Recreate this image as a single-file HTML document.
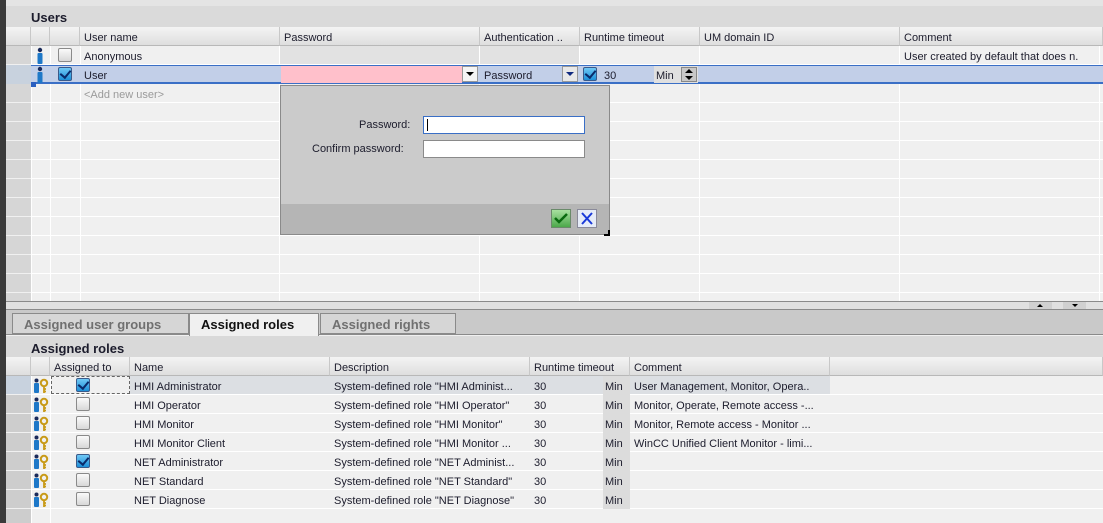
<!DOCTYPE html><html><head><style>
*{margin:0;padding:0;box-sizing:border-box}
body{width:1103px;height:523px;overflow:hidden;background:#f0f0f0;font-family:"Liberation Sans",sans-serif;font-size:11px;color:#1c1c2c;position:relative}
.a{position:absolute}
.t{position:absolute;white-space:nowrap;line-height:19px;margin-top:2px}
.cb{position:absolute;width:14px;height:14px;border:1px solid #8a8a8a;border-radius:2px;background:linear-gradient(#fafafa,#d8d8d8)}
.cb.on{background:linear-gradient(#6fc8f5,#1d8fd8);border-color:#3a5a8a}
.cb.on:after{content:"";position:absolute;left:3px;top:0px;width:5px;height:8px;border:solid #0a2a6a;border-width:0 2px 2px 0;transform:rotate(40deg)}
.hd{background:linear-gradient(#f4f4f4,#dedede);border-right:1px solid #c8c8c8;border-bottom:1px solid #b8b8b8}
svg.i{position:absolute}
</style></head><body>
<div class="a" style="left:0;top:0;width:6px;height:523px;background:#3a3a3a"></div>
<div class="a" style="left:6px;top:0;width:1097px;height:6px;background:#e4e4e4"></div>
<div class="a" style="left:6px;top:6px;width:1097px;height:21px;background:#dadada"></div>
<div class="t" style="left:31px;top:5px;font-size:13px;font-weight:bold;line-height:21px">Users</div>
<div class="a hd" style="left:6px;top:27px;width:25px;height:19px"></div>
<div class="a hd" style="left:31px;top:27px;width:19px;height:19px"></div>
<div class="a hd" style="left:50px;top:27px;width:30px;height:19px"></div>
<div class="a hd" style="left:80px;top:27px;width:200px;height:19px"></div><div class="t" style="left:84px;top:27px">User name</div>
<div class="a hd" style="left:280px;top:27px;width:200px;height:19px"></div><div class="t" style="left:284px;top:27px">Password</div>
<div class="a hd" style="left:480px;top:27px;width:100px;height:19px"></div><div class="t" style="left:484px;top:27px">Authentication ..</div>
<div class="a hd" style="left:580px;top:27px;width:120px;height:19px"></div><div class="t" style="left:584px;top:27px">Runtime timeout</div>
<div class="a hd" style="left:700px;top:27px;width:200px;height:19px"></div><div class="t" style="left:704px;top:27px">UM domain ID</div>
<div class="a hd" style="left:900px;top:27px;width:203px;height:19px"></div><div class="t" style="left:904px;top:27px">Comment</div>
<div class="a" style="left:6px;top:46px;width:25px;height:255px;background:#d6d6d6"></div>
<div class="a" style="left:31px;top:46px;width:1072px;height:255px;background:repeating-linear-gradient(#f0f0f0 0 18px,#fff 18px 19px)"></div>
<div class="a" style="left:6px;top:46px;width:25px;height:255px;background:repeating-linear-gradient(transparent 0 18px,#f0f0f0 18px 19px)"></div>
<div class="a" style="left:31px;top:46px;width:1px;height:255px;background:#fff"></div>
<div class="a" style="left:50px;top:46px;width:1px;height:255px;background:#fff"></div>
<div class="a" style="left:80px;top:46px;width:1px;height:255px;background:#fff"></div>
<div class="a" style="left:279px;top:46px;width:1px;height:255px;background:#fff"></div>
<div class="a" style="left:479px;top:46px;width:1px;height:255px;background:#fff"></div>
<div class="a" style="left:579px;top:46px;width:1px;height:255px;background:#fff"></div>
<div class="a" style="left:699px;top:46px;width:1px;height:255px;background:#fff"></div>
<div class="a" style="left:899px;top:46px;width:1px;height:255px;background:#fff"></div>
<div class="a" style="left:1099px;top:46px;width:1px;height:255px;background:#fff"></div>
<div class="a" style="left:280px;top:46px;width:199px;height:18px;background:#e2e2e2"></div>
<div class="a" style="left:480px;top:46px;width:99px;height:18px;background:#e2e2e2"></div>
<svg class="i" style="left:36px;top:47px" width="8" height="17"><circle cx="4" cy="3" r="2.2" fill="#1a2a5a"/><rect x="1.5" y="6" width="5" height="11" rx="1" fill="#1e78c8"/></svg>
<div class="cb" style="left:58px;top:48px"></div>
<div class="t" style="left:84px;top:46px">Anonymous</div>
<div class="t" style="left:904px;top:46px">User created by default that does n.</div>
<div class="a" style="left:6px;top:65px;width:25px;height:19px;background:#c8d2de"></div>
<div class="a" style="left:31px;top:65px;width:1072px;height:19px;background:#c2cfe8;border-top:1px solid #3a6fc6;border-bottom:2px solid #3a6fc6"></div>
<div class="a" style="left:31px;top:82px;width:5px;height:5px;background:#2a5fc0"></div>
<div class="a" style="left:281px;top:66px;width:181px;height:17px;background:#ffc0cb"></div>
<div class="a" style="left:462px;top:66px;width:16px;height:16px;background:#f4f4f4;border:1px solid #999"></div>
<svg class="i" style="left:466px;top:72px" width="8" height="5"><path d="M0 0H8L4 4Z" fill="#000"/></svg>
<div class="t" style="left:484px;top:65px">Password</div>
<div class="a" style="left:562px;top:66px;width:16px;height:16px;background:#e8e8e8;border:1px solid #999"></div>
<svg class="i" style="left:566px;top:72px" width="8" height="5"><path d="M0 0H8L4 4Z" fill="#102a80"/></svg>
<div class="cb on" style="left:583px;top:67px"></div>
<div class="t" style="left:604px;top:65px">30</div>
<div class="a" style="left:654px;top:66px;width:44px;height:17px;background:#e0e0e0"></div>
<div class="t" style="left:656px;top:65px">Min</div>
<div class="a" style="left:681px;top:67px;width:16px;height:15px;background:#c8c8c8;border:1px solid #888"></div>
<svg class="i" style="left:685px;top:69px" width="8" height="11"><path d="M0 4H8L4 0Z M0 7H8L4 11Z" fill="#000"/></svg>
<svg class="i" style="left:36px;top:66px" width="8" height="17"><circle cx="4" cy="3" r="2.2" fill="#1a2a5a"/><rect x="1.5" y="6" width="5" height="11" rx="1" fill="#1e78c8"/></svg>
<div class="cb on" style="left:58px;top:67px"></div>
<div class="t" style="left:84px;top:65px">User</div>
<div class="t" style="left:84px;top:84px;color:#9a9a9a">&lt;Add new user&gt;</div>
<div class="a" style="left:280px;top:85px;width:330px;height:150px;background:#cbcbcb;border:1px solid #8a8a8a"></div>
<div class="a" style="left:281px;top:204px;width:328px;height:30px;background:#b5b5b5"></div>
<div class="t" style="left:359px;top:114px">Password:</div>
<div class="t" style="left:312px;top:138px">Confirm password:</div>
<div class="a" style="left:423px;top:116px;width:162px;height:18px;background:#fff;border:1px solid #3a6fc6"></div>
<div class="a" style="left:427px;top:119px;width:1px;height:12px;background:#000"></div>
<div class="a" style="left:423px;top:140px;width:162px;height:18px;background:#fff;border:1px solid #8a8a8a"></div>
<div class="a" style="left:551px;top:209px;width:20px;height:19px;background:linear-gradient(#a8e0a0,#4ca84a);border:1px solid #6a8a6a"></div>
<svg class="i" style="left:554px;top:212px" width="14" height="12"><path d="M1 6L5 10L13 2" stroke="#0a6a10" stroke-width="2.5" fill="none"/></svg>
<div class="a" style="left:577px;top:209px;width:20px;height:19px;background:#e6ecf8;border:1px solid #8a8a9a"></div>
<svg class="i" style="left:581px;top:212px" width="12" height="13"><path d="M1 1L11 12M11 1L1 12" stroke="#1a3ad8" stroke-width="2" fill="none"/></svg>
<div class="a" style="left:604px;top:230px;width:6px;height:6px;border-right:2px solid #000;border-bottom:2px solid #000"></div>
<div class="a" style="left:6px;top:301px;width:1097px;height:9px;background:#e0e0e0;border-top:1px solid #8a8a8a;border-bottom:1px solid #8a8a8a"></div>
<div class="a" style="left:1029px;top:302px;width:23px;height:7px;background:#d0d0d0"></div>
<svg class="i" style="left:1037px;top:304px" width="6" height="3"><path d="M0 3H6L3 0Z" fill="#000"/></svg>
<div class="a" style="left:1063px;top:302px;width:23px;height:7px;background:#d0d0d0"></div>
<svg class="i" style="left:1072px;top:304px" width="6" height="3"><path d="M0 0H6L3 3Z" fill="#000"/></svg>
<div class="a" style="left:6px;top:310px;width:1097px;height:25px;background:#c9c9c9;border-bottom:1px solid #8a8a8a"></div>
<div class="a" style="left:12px;top:313px;width:177px;height:21px;background:#d6d6d6;border:1px solid #8a8a8a"></div><div class="t" style="left:24px;top:313px;font-size:13px;font-weight:bold;color:#707070">Assigned user groups</div>
<div class="a" style="left:189px;top:313px;width:130px;height:23px;background:#f0f0f0;border:1px solid #8a8a8a;border-bottom:none"></div><div class="t" style="left:201px;top:313px;font-size:13px;font-weight:bold;color:#111">Assigned roles</div>
<div class="a" style="left:320px;top:313px;width:136px;height:21px;background:#d6d6d6;border:1px solid #8a8a8a"></div><div class="t" style="left:332px;top:313px;font-size:13px;font-weight:bold;color:#707070">Assigned rights</div>
<div class="a" style="left:6px;top:336px;width:1097px;height:21px;background:#d9d9d9"></div>
<div class="t" style="left:31px;top:336px;font-size:13px;font-weight:bold;line-height:21px">Assigned roles</div>
<div class="a hd" style="left:6px;top:357px;width:25px;height:19px"></div>
<div class="a hd" style="left:31px;top:357px;width:19px;height:19px"></div>
<div class="a hd" style="left:50px;top:357px;width:80px;height:19px"></div><div class="t" style="left:54px;top:357px">Assigned to</div>
<div class="a hd" style="left:130px;top:357px;width:200px;height:19px"></div><div class="t" style="left:134px;top:357px">Name</div>
<div class="a hd" style="left:330px;top:357px;width:200px;height:19px"></div><div class="t" style="left:334px;top:357px">Description</div>
<div class="a hd" style="left:530px;top:357px;width:100px;height:19px"></div><div class="t" style="left:534px;top:357px">Runtime timeout</div>
<div class="a hd" style="left:630px;top:357px;width:200px;height:19px"></div><div class="t" style="left:634px;top:357px">Comment</div>
<div class="a hd" style="left:830px;top:357px;width:273px;height:19px"></div>
<div class="a" style="left:6px;top:376px;width:25px;height:147px;background:repeating-linear-gradient(#cdcdcd 0 18px,#f0f0f0 18px 19px)"></div>
<div class="a" style="left:31px;top:376px;width:1072px;height:147px;background:repeating-linear-gradient(#f0f0f0 0 18px,#fff 18px 19px)"></div>
<div class="a" style="left:31px;top:376px;width:1px;height:147px;background:#fff"></div>
<div class="a" style="left:50px;top:376px;width:1px;height:147px;background:#fff"></div>
<div class="a" style="left:6px;top:376px;width:25px;height:18px;background:#c8d2de"></div>
<div class="a" style="left:130px;top:376px;width:700px;height:18px;background:#dcdfe3"></div>
<div class="a" style="left:51px;top:376px;width:79px;height:18px;border:1px dashed #666"></div>
<div class="a" style="left:603px;top:376px;width:27px;height:133px;background:#dcdcdc"></div>

<svg class="i" style="left:33px;top:378px" width="16" height="133">
<defs><g id="pk"><circle cx="3.5" cy="2.5" r="2" fill="#1a2a5a"/><rect x="1" y="5" width="5" height="10" rx="1" fill="#1e78c8"/><circle cx="11" cy="5" r="3.2" fill="none" stroke="#c89a18" stroke-width="2"/><path d="M11 8V15M11 11H13M11 13.5H13" stroke="#c89a18" stroke-width="1.8"/></g></defs>
<use href="#pk" y="0"/><use href="#pk" y="19"/><use href="#pk" y="38"/><use href="#pk" y="57"/><use href="#pk" y="76"/><use href="#pk" y="95"/><use href="#pk" y="114"/>
</svg>

<div class="cb on" style="left:76px;top:378px"></div>
<div class="cb" style="left:76px;top:397px"></div>
<div class="cb" style="left:76px;top:416px"></div>
<div class="cb" style="left:76px;top:435px"></div>
<div class="cb on" style="left:76px;top:454px"></div>
<div class="cb" style="left:76px;top:473px"></div>
<div class="cb" style="left:76px;top:492px"></div>

<div class="t" style="left:134px;top:376px">HMI Administrator</div><div class="t" style="left:334px;top:376px">System-defined role "HMI Administ...</div><div class="t" style="left:534px;top:376px">30</div><div class="t" style="left:605px;top:376px">Min</div><div class="t" style="left:634px;top:376px">User Management, Monitor, Opera..</div>
<div class="t" style="left:134px;top:395px">HMI Operator</div><div class="t" style="left:334px;top:395px">System-defined role "HMI Operator"</div><div class="t" style="left:534px;top:395px">30</div><div class="t" style="left:605px;top:395px">Min</div><div class="t" style="left:634px;top:395px">Monitor, Operate, Remote access -...</div>
<div class="t" style="left:134px;top:414px">HMI Monitor</div><div class="t" style="left:334px;top:414px">System-defined role "HMI Monitor"</div><div class="t" style="left:534px;top:414px">30</div><div class="t" style="left:605px;top:414px">Min</div><div class="t" style="left:634px;top:414px">Monitor, Remote access - Monitor ...</div>
<div class="t" style="left:134px;top:433px">HMI Monitor Client</div><div class="t" style="left:334px;top:433px">System-defined role "HMI Monitor ...</div><div class="t" style="left:534px;top:433px">30</div><div class="t" style="left:605px;top:433px">Min</div><div class="t" style="left:634px;top:433px">WinCC Unified Client Monitor - limi...</div>
<div class="t" style="left:134px;top:452px">NET Administrator</div><div class="t" style="left:334px;top:452px">System-defined role "NET Administ...</div><div class="t" style="left:534px;top:452px">30</div><div class="t" style="left:605px;top:452px">Min</div>
<div class="t" style="left:134px;top:471px">NET Standard</div><div class="t" style="left:334px;top:471px">System-defined role "NET Standard"</div><div class="t" style="left:534px;top:471px">30</div><div class="t" style="left:605px;top:471px">Min</div>
<div class="t" style="left:134px;top:490px">NET Diagnose</div><div class="t" style="left:334px;top:490px">System-defined role "NET Diagnose"</div><div class="t" style="left:534px;top:490px">30</div><div class="t" style="left:605px;top:490px">Min</div>
</body></html>
